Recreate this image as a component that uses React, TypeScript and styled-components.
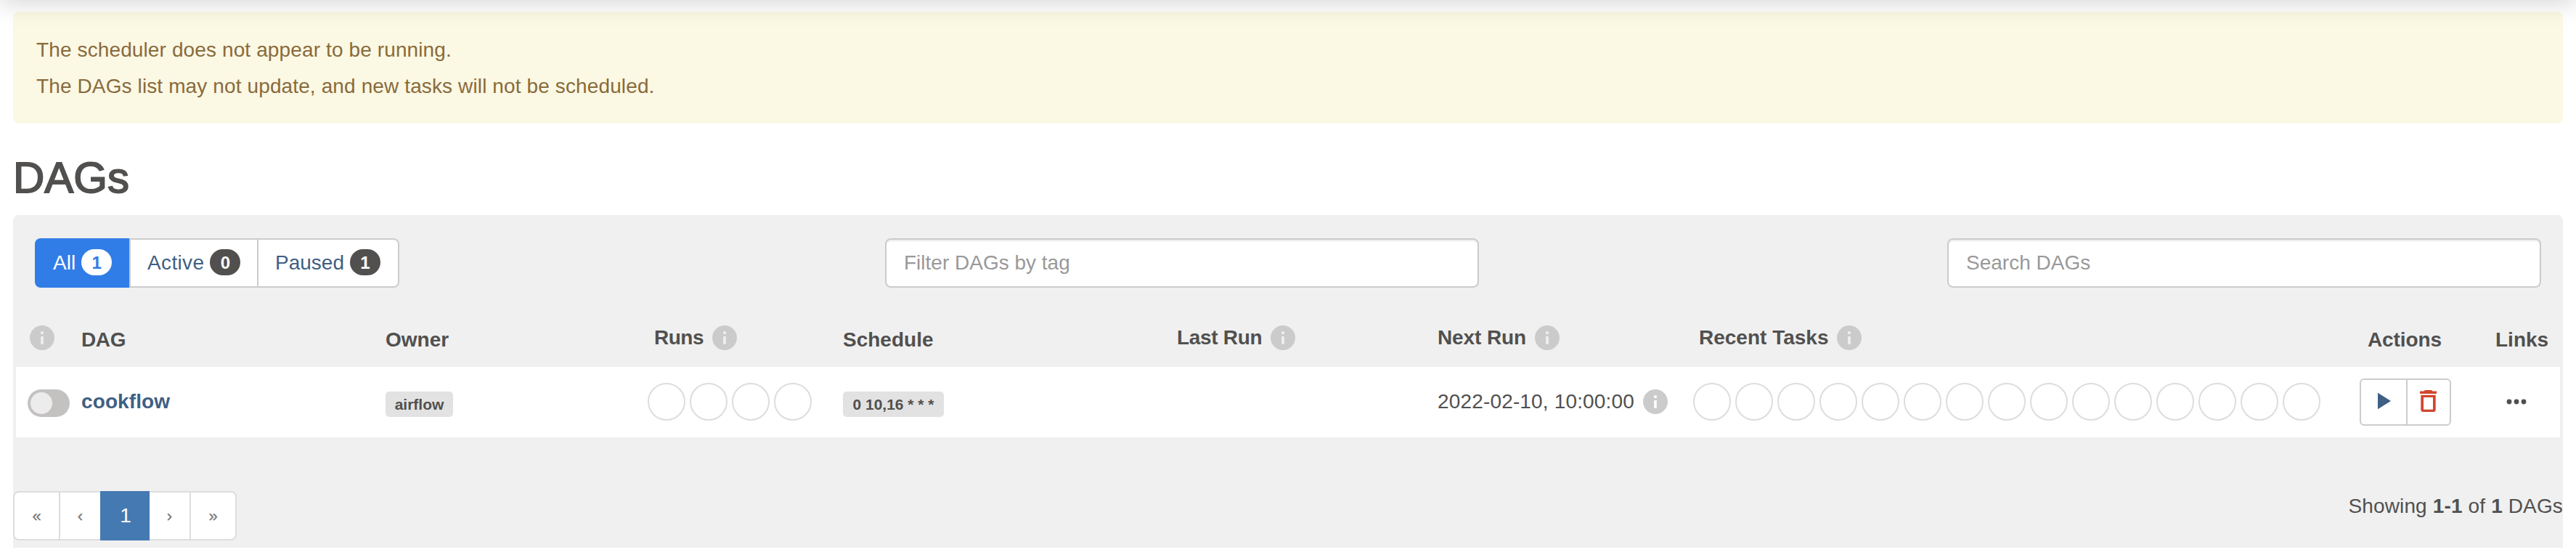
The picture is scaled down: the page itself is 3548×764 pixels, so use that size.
import React from "react";
import styled, { createGlobalStyle, css } from "styled-components";

const Global = createGlobalStyle`
  * { box-sizing: border-box; }
  body {
    margin: 0;
    background: #fff;
    color: #51504f;
    font-family: "Liberation Sans", Arial, sans-serif;
    font-size: 28px;
    line-height: 40px;
  }
`;

const Page = styled.main`
  height: 764px;
  padding: 16px 18px 0;
  position: relative;
  overflow: hidden;
`;

const TopShadow = styled.div`
  position: absolute;
  inset: -40px 0 auto 0;
  height: 40px;
  pointer-events: none;
  box-shadow: 0 4px 32px rgba(81, 80, 79, 0.24);
`;

const Alert = styled.div`
  height: 154px;
  padding: 28px 32px;
  border-radius: 8px;
  background: #fbf8e4;
  color: #886b3c;
  white-space: nowrap;
`;

const AlertLine = styled.p`
  margin: 0;
  height: 50px;
  line-height: 50px;
  letter-spacing: 0.12px;
`;

const Title = styled.h2`
  margin: 42px 0 18px;
  height: 66px;
  line-height: 66px;
  font-size: 60px;
  font-weight: 400;
  -webkit-text-stroke: 1.8px #51504f;
`;

const Panel = styled.section`
  height: 458px;
  background: #f0f0f0;
  border-radius: 8px 8px 0 0;
`;

const Toolbar = styled.div`
  display: grid;
  grid-template-columns: 1171px 818px 1fr 818px;
  padding: 32px 30px 0;
`;

const Group = styled.div`
  display: flex;
`;

const FilterButton = styled.a<{ $width: number; $active?: boolean; $spacing?: number }>`
  display: flex;
  align-items: center;
  gap: 8px;
  width: ${(p) => p.$width}px;
  height: 68px;
  padding-left: 23px;
  border: 2px solid #ccc;
  border-right-width: 0;
  background: #fff;
  color: #3f5f84;
  letter-spacing: ${(p) => p.$spacing ?? 0}px;
  &:first-child { border-radius: 8px 0 0 8px; }
  &:last-child { border-right-width: 2px; border-radius: 0 8px 8px 0; }
  ${(p) => p.$active && css`
    background: #317de7;
    border-color: #317de7;
    color: #fff;
  `}
`;

const Badge = styled.span<{ $active?: boolean }>`
  width: 42px;
  height: 36px;
  border-radius: 20px;
  margin-top: -2px;
  background: ${(p) => (p.$active ? "#fff" : "#51504f")};
  color: ${(p) => (p.$active ? "#317de7" : "#fff")};
  font-size: 24px;
  font-weight: 700;
  line-height: 37px;
  letter-spacing: 0;
  text-align: center;
`;

const Input = styled.input`
  width: 818px;
  height: 68px;
  padding: 0 24px;
  border: 2px solid #ccc;
  border-radius: 8px;
  background: #fff;
  box-shadow: inset 0 2px 2px rgba(0, 0, 0, 0.075);
  font: 28px "Liberation Sans", Arial, sans-serif;
  &::placeholder { color: #999; opacity: 1; }
`;

const columns = css`
  display: grid;
  grid-template-columns: 74px 419px 361px 269px 460px 359px 352px 918px 187px 1fr;
`;

const Head = styled.div`
  ${columns}
  height: 109px;
  padding: 51px 0 0 20px;
  font-weight: 700;
`;

const HeadCell = styled.div<{ $raised?: boolean; $indent?: number; $spacing?: number }>`
  display: flex;
  align-items: center;
  gap: 12px;
  height: 36px;
  padding-top: ${(p) => (p.$raised ? 0 : 5)}px;
  margin-left: ${(p) => p.$indent ?? 0}px;
  letter-spacing: ${(p) => p.$spacing ?? 0}px;
  white-space: nowrap;
`;

const Row = styled.div`
  ${columns}
  height: 97px;
  margin: 0 4px;
  padding-left: 16px;
  padding-bottom: 1px;
  align-items: center;
  background: #fff;
`;

const Switch = styled.span`
  display: block;
  width: 58px;
  height: 38px;
  padding: 4px;
  margin-top: 4px;
  border-radius: 19px;
  background: #c4c2c1;
  &::after {
    content: "";
    display: block;
    width: 30px;
    height: 30px;
    border-radius: 50%;
    background: #edecec;
  }
`;

const DagLink = styled.a`
  color: #3f5f84;
  font-weight: 700;
  letter-spacing: 0.1px;
`;

const Tag = styled.span<{ $width: number }>`
  width: ${(p) => p.$width}px;
  height: 35px;
  margin-top: 7px;
  border-radius: 5px;
  background: #e2e2e2;
  font-size: 21px;
  font-weight: 700;
  line-height: 35px;
  text-align: center;
  white-space: nowrap;
`;

const Circles = styled.div`
  display: flex;
  gap: 6px;
`;

const Circle = styled.span`
  flex: none;
  width: 52px;
  height: 52px;
  border: 2px solid #ddd;
  border-radius: 50%;
`;

const DateCell = styled.div`
  display: flex;
  align-items: center;
  gap: 12px;
  letter-spacing: 0.16px;
  white-space: nowrap;
`;

const Actions = styled.div`
  display: flex;
  width: 126px;
  height: 65px;
  border: 2px solid #ccc;
  border-radius: 6px;
`;

const ActionButton = styled.a`
  display: flex;
  flex: 1;
  align-items: center;
  justify-content: center;
  padding-bottom: 3px;
  &:first-child { padding-left: 3px; }
  & + & { border-left: 2px solid #ccc; }
`;

const LinksCell = styled.div`
  display: flex;
  margin-left: 15px;
`;

const Footer = styled.div`
  display: flex;
  justify-content: space-between;
  padding-top: 74px;
`;

const Pager = styled.div`
  display: flex;
  height: 68px;
`;

const PageLink = styled.a<{ $width: number; $active?: boolean; $joined?: boolean }>`
  width: ${(p) => p.$width}px;
  height: 68px;
  border: 2px solid #ddd;
  border-right-width: 0;
  background: #fff;
  color: #777;
  font-size: 22px;
  line-height: 66px;
  text-align: center;
  -webkit-text-stroke: 0.3px #777;
  &:first-child { border-radius: 8px 0 0 8px; }
  &:last-child { border-right-width: 2px; border-radius: 0 8px 8px 0; }
  ${(p) => p.$joined && css`
    border-left-width: 0;
  `}
  ${(p) => p.$active && css`
    background: #4479b2;
    border-color: #4479b2;
    color: #fff;
    font-size: 28px;
    line-height: 64px;
    -webkit-text-stroke: 0;
  `}
`;

const Summary = styled.div`
  padding-top: 1px;
  letter-spacing: 0.14px;
  white-space: nowrap;
`;

const Svg = styled.svg`
  display: block;
  flex: none;
`;

const InfoIcon = ({ mark = "#f0f0f0" }: { mark?: string }) => (
  <Svg width="34" height="34" viewBox="0 0 34 34">
    <circle cx="17" cy="17" r="17" fill="#cbcbcb" />
    <path d="M15.200 8.300h3.600v3.600h-3.600zM15.200 15h3.600v10.800h-3.600z" fill={mark} />
  </Svg>
);

const PlayIcon = () => (
  <Svg width="18" height="24" viewBox="0 0 18 24">
    <path d="M0 .7v22.600l18-11.300z" fill="#3f5f84" />
  </Svg>
);

const TrashIcon = () => (
  <Svg width="24" height="30" viewBox="0 0 24 30">
    <path d="M7 0h9l1.500 1.500H23V5H0V1.500h5.500z" fill="#d2452d" />
    <path
      d="M1.300 6.700h20.400v20.100a3.200 3.200 0 0 1-3.200 3.200h-14a3.200 3.200 0 0 1-3.200-3.200zM5 10.100v16.600h13V10.100z"
      fill="#d2452d"
      fillRule="evenodd"
    />
  </Svg>
);

const MoreIcon = () => (
  <Svg width="28" height="8" viewBox="0 0 28 8">
    {[4, 14, 24].map((x) => (
      <circle key={x} cx={x} cy="4" r="3.400" fill="#51504f" />
    ))}
  </Svg>
);

const CircleRow = ({ count }: { count: number }) => (
  <Circles>
    {Array.from({ length: count }, (_, i) => (
      <Circle key={i} />
    ))}
  </Circles>
);

export default function App() {
  return (
    <>
      <Global />
      <Page>
        <Alert>
          <AlertLine>The scheduler does not appear to be running.</AlertLine>
          <AlertLine>The DAGs list may not update, and new tasks will not be scheduled.</AlertLine>
        </Alert>
        <Title>DAGs</Title>
        <Panel>
          <Toolbar>
            <Group>
              <FilterButton $width={130} $active>All <Badge $active>1</Badge></FilterButton>
              <FilterButton $width={176} $spacing={0.35}>Active <Badge>0</Badge></FilterButton>
              <FilterButton $width={196}>Paused <Badge>1</Badge></FilterButton>
            </Group>
            <Input placeholder="Filter DAGs by tag" />
            <span />
            <Input placeholder="Search DAGs" />
          </Toolbar>
          <Head>
            <HeadCell $raised $indent={3}><InfoIcon /></HeadCell>
            <HeadCell $spacing={-0.4}>DAG</HeadCell>
            <HeadCell>Owner</HeadCell>
            <HeadCell $raised $indent={9} $spacing={-0.5}>Runs <InfoIcon /></HeadCell>
            <HeadCell>Schedule</HeadCell>
            <HeadCell $raised $spacing={-0.3}>Last Run <InfoIcon /></HeadCell>
            <HeadCell $raised $spacing={-0.1}>Next Run <InfoIcon /></HeadCell>
            <HeadCell $raised $indent={8}>Recent Tasks <InfoIcon /></HeadCell>
            <HeadCell $indent={11} $spacing={-0.1}>Actions</HeadCell>
            <HeadCell>Links</HeadCell>
          </Head>
          <Row>
            <Switch />
            <DagLink>cookflow</DagLink>
            <Tag $width={93}>airflow</Tag>
            <CircleRow count={4} />
            <Tag $width={139}>0 10,16 * * *</Tag>
            <span />
            <DateCell>2022-02-10, 10:00:00 <InfoIcon mark="#fff" /></DateCell>
            <CircleRow count={15} />
            <Actions>
              <ActionButton><PlayIcon /></ActionButton>
              <ActionButton><TrashIcon /></ActionButton>
            </Actions>
            <LinksCell><MoreIcon /></LinksCell>
          </Row>
          <Footer>
            <Pager>
              <PageLink $width={63}>«</PageLink>
              <PageLink $width={57}>‹</PageLink>
              <PageLink $width={68} $active>1</PageLink>
              <PageLink $width={55} $joined>›</PageLink>
              <PageLink $width={65}>»</PageLink>
            </Pager>
            <Summary>Showing <b>1-1</b> of <b>1</b> DAGs</Summary>
          </Footer>
        </Panel>
        <TopShadow />
      </Page>
    </>
  );
}
